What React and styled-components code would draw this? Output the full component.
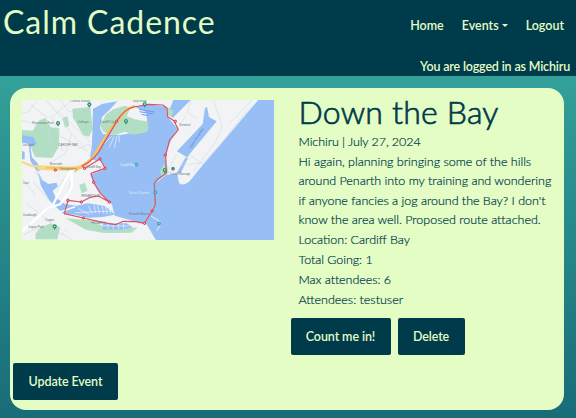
import React from "react";
import styled, { createGlobalStyle } from "styled-components";

const Global = createGlobalStyle`
  * { box-sizing: border-box; }
  body {
    margin: 0;
    height: 418px;
    overflow: hidden;
    font-family: Lato, "Liberation Sans", sans-serif;
    color: #003a4b;
  }
`;
const Page = styled.div`
  height: 418px;
  background: linear-gradient(#39aca0 0%, #186c78 100%);
`;
const Header = styled.header`
  height: 76px;
  background: #003b4b;
  color: #e3fdc5;
  display: flex;
  justify-content: space-between;
  padding: 0 6px 0 3px;
`;
const Brand = styled.h1`
  margin: 3px 0 0;
  font-size: 32px;
  line-height: 38px;
  font-weight: 400;
  letter-spacing: 0.95px;
  white-space: nowrap;
`;
const Side = styled.div`
  display: flex;
  flex-direction: column;
  align-items: flex-end;
`;
const Nav = styled.nav`
  display: flex;
  gap: 18px;
  padding: 17px 6px 0 0;
`;
const NavLink = styled.a`
  display: flex;
  align-items: center;
  gap: 3px;
  font-size: 12.5px;
  line-height: 18px;
  font-weight: 600;
`;
const Caret = styled.span`
  border: 3.5px solid transparent;
  border-top-color: currentColor;
  border-bottom: 0;
  margin-top: -1px;
`;
const Status = styled.p`
  margin: 23px 0 0;
  font-size: 12.5px;
  line-height: 18px;
  font-weight: 600;
  letter-spacing: -0.17px;
  white-space: nowrap;
`;
const Card = styled.main`
  margin: 12px 12px 0 9.5px;
  height: 322px;
  border-radius: 16px;
  background: #e3fdc5;
  display: flex;
  flex-direction: column;
  justify-content: space-between;
  padding: 5px 4px 10px 3.5px;
`;
const Columns = styled.div`
  display: grid;
  grid-template-columns: 278px 1fr;
`;
const RouteMap = styled.svg`
  display: block;
  width: 252px;
  height: 140px;
  margin: 7px 0 0 9px;
`;
const Details = styled.section`
  padding-left: 7.5px;
`;
const Title = styled.h2`
  margin: 0 0 1px;
  font-size: 32px;
  line-height: 38px;
  font-weight: 300;
  -webkit-text-stroke: 0.7px currentColor;
  letter-spacing: 0.2px;
  white-space: nowrap;
`;
const Line = styled.p`
  margin: 0;
  font-size: 12.5px;
  line-height: 19.9px;
  font-weight: 300;
  -webkit-text-stroke: 0.2px currentColor;
  letter-spacing: ${(p) => p.$spacing || "0"};
  white-space: nowrap;
`;
const Message = styled(Line)`
  line-height: 19.4px;
  letter-spacing: -0.02px;
  margin: 0 0 0.5px;
`;
const Actions = styled.div`
  display: flex;
  gap: 7px;
  margin: 8px 0 0 -8px;
`;
const Button = styled.button`
  width: ${(p) => p.$width}px;
  height: 37px;
  padding: 0;
  border: 0;
  border-radius: 2px;
  background: #003b4b;
  color: #e3fdc5;
  font: 600 12.5px Lato, "Liberation Sans", sans-serif;
  letter-spacing: -0.1px;
`;

const routeStops = [[290, 70], [194, 211], [221, 253], [184, 312], [144, 307], [190, 360], [268, 312], [374, 376], [436, 171], [396, 339], [466, 70], [106, 216], [255, 211], [240, 183]];
const places = [[208, 19], [114, 75], [318, 69], [374, 18], [104, 385], [434, 216]];
const darkPlaces = [[459, 212]];
const waterPlaces = [[349, 200], [417, 377], [406, 283]];
const labels = [
  [37, 79, "Pontcanna Park"], [173, 74, "Cathays"], [115, 145, "CARDIFF BAY"],
  [89, 201, "Riverside"], [199, 211, "Cardiff Bay"], [184, 298, "PENARTH RD"],
  [214, 379, "PENARTH"], [327, 350, "Penarth Marina"], [477, 83, "Terminal"],
  [450, 230, "Cardiff Barrage"], [24, 389, "Cogan Park"], [151, 13, "Central Station"],
  [240, 75, "Cardiff City"], [8, 144, "Leckwith"], [76, 369, "Cogan"],
  [120, 215, "Grangetown"], [8, 258, "Cwrt"], [340, 13, "Bay Road"], [8, 353, "Llandough"],
];

function CardiffMap() {
  return (
    <RouteMap viewBox="6 6 756 420" preserveAspectRatio="none" role="img" aria-label="Route around Cardiff Bay">
      <rect x="6" y="6" width="756" height="420" fill="#f1f3f5" />
      <g fill="#b2dec3">
        <path d="M6 96L38 98L58 67L77 60L92 88L118 91L116 147L96 180L45 177L29 138L6 134Z" />
        <path d="M157 32L211 27L218 92L207 116L190 112L159 59Z" />
        <path d="M127 60L142 55L148 83L135 89Z" />
        <path d="M178 261L194 254L203 278L185 286Z" />
        <path d="M46 408L62 388L94 376L120 388L112 424H47Z" />
        <path d="M137 361L208 367L247 383L304 388L357 389L373 404L252 405L198 395Z" />
      </g>
      <g fill="#98bff5">
        <path d="M219 32L246 18L292 10L269 35L246 57L240 90L248 108L302 111L383 96L379 43L346 27L390 19L438 27L443 56L475 95L449 133L436 174L436 227L403 256L403 318L374 377L348 371L284 353L276 320L242 285L211 231L258 212L240 183L230 190L210 180L216 138Z" />
        <path d="M439 230L472 228L477 254Q488 267 509 250L545 205L603 138L683 43L715 6H762V426H407L386 389L378 376L404 318L404 257Z" />
        <path d="M555 31L548 78L471 160L501 178L590 70L567 57L561 27Z" />
        <path d="M460 6H512L458 60L445 45Z" />
        <path d="M471 224L497 178L504 181L482 226Z" />
        <path d="M53 220L67 246L85 258L110 254L113 266L98 278L107 299L137 319L170 323L203 316L252 323L274 338L283 350L248 357L204 359L164 350L128 346L89 308L63 264Z" />
        <path d="M6 112L40 117L50 137L31 147L36 178L53 196L61 218L49 218L31 188L26 137L6 133Z" />
        <path d="M6 158L14 163L14 184L6 184Z" />
        <path d="M248 377L319 375L337 388L309 395H248Z" />
      </g>
      <path d="M362 381L382 386L407 426H311L330 407Z" fill="#f1f3f5" />
      <g fill="#b2dec3">
        <path d="M257 50L280 34L315 23L331 30L320 55L344 64L385 71L382 102L341 110L315 101L284 111L250 102L241 83Z" />
        <path d="M440 26L461 39L453 57L438 48Z" />
        <path d="M431 200L441 201L446 224L425 234L420 220Z" />
      </g>
      <g fill="none" stroke="#cfd8e2" strokeWidth="1.7">
        <path d="M78 6L127 62L156 111L199 151M48 11L25 42L6 47M148 14L95 58L120 114L203 160M154 112L136 166L94 193M110 35L211 132M113 268L150 220M39 251L89 309L134 351M18 315L99 379M91 387L157 426M6 242L47 291M151 250L139 313M120 6L148 42L212 27M6 66L69 87M34 21L83 60" />
        <path d="M486 207L510 171L548 198L600 140L683 35M503 199L549 195M512 8L502 42L530 62M581 8L606 83L590 126L564 163L521 219M697 6L626 79M442 151L462 108L500 50M436 229L471 168" />
        <path d="M79 140Q119 111 127 159M176 152L206 138L235 184M85 90L94 174M122 413L144 392M57 203L47 222L70 254M11 410L49 393L94 426" />
      </g>
      <path d="M154 220L156 264L145 288L120 319L83 330L44 366L6 401M184 208L150 220L99 320" fill="none" stroke="#ffffff" strokeWidth="7" />
      <path d="M112 345L165 326" fill="none" stroke="#fafafa" strokeWidth="5" />
      <g fill="none" stroke="#eef5fa" strokeWidth="2">
        <path d="M275 115L253 137M282 116L268 148M291 115L283 149M297 112L298 132M175 332L209 350M204 322L217 347M222 321L226 344M233 322L238 346M246 322L251 347M257 325L262 349M268 330L272 347M166 344L276 339M247 383L327 384M264 377V394M280 376V394M296 376V394M311 376V394" />
      </g>
      <path d="M357 34L403 42M358 41L400 48M365 49L385 53" stroke="#709bec" strokeWidth="3" fill="none" />
      <path d="M6 191Q36 208 63 205L151 210L193 204M54 212Q105 216 150 214L192 200" fill="none" stroke="#f5d98a" strokeWidth="7" />
      <path d="M75 209L185 210M164 221L211 185" fill="none" stroke="#fbbf65" strokeWidth="6" />
      <path d="M188 204Q218 187 236 150L274 90L303 55Q320 30 345 24" fill="none" stroke="#f8c260" strokeWidth="8" />
      <path d="M192 212L240 183L255 211L213 226L221 253L241 286L268 312L235 294L211 298L184 312L144 307L133 347L190 360L247 373L286 380L310 370L348 371L374 376L396 339L406 319L403 257L411 246L439 226L437 171L449 126L475 95L462 68L443 56L441 31L428 21L386 19L341 27Q311 34 290 70L272 101L247 143Q227 184 187 204Z" fill="none" stroke="#da5063" strokeWidth="3.5" strokeLinejoin="round" />
      <path d="M398 338L405 319L403 257L411 244L438 226L437 186" fill="none" stroke="#8c8d75" strokeWidth="2" />
      <path d="M393 354L414 367Q429 376 410 398" fill="none" stroke="#edf1f4" strokeWidth="3" />
      {routeStops.map(([x, y]) => <circle key={`${x}-${y}`} cx={x} cy={y} r="3.5" fill="#f3b3bb" stroke="#d32d48" strokeWidth="2.8" />)}
      {places.map(([x, y]) => (
        <g key={`${x}-${y}`}><path d={`M${x - 6} ${y}L${x} ${y + 11}L${x + 6} ${y}Z`} fill="#32936d" /><circle cx={x} cy={y} r="6" fill="#32936d" /><circle cx={x} cy={y} r="2" fill="#fff" /></g>
      ))}
      {darkPlaces.map(([x, y]) => <circle key={x} cx={x} cy={y} r="5.5" fill="#54848b" />)}
      {waterPlaces.map(([x, y]) => <circle key={x} cx={x} cy={y} r="4.5" fill="#75c8d4" stroke="#288dae" strokeWidth="2.5" />)}
      <g fill="#6b767e" fontFamily="Liberation Sans, sans-serif" fontSize="9">
        {labels.map(([x, y, text]) => <text key={text} x={x} y={y}>{text}</text>)}
        <text transform="translate(512 151) rotate(-56)" fill="#477fb8">Queen Alexandra</text>
        <text x="301" y="203" fill="#e8f4f7">Cardiff Bay</text>
        <text x="327" y="287" fill="#d9edf5">Bristol Channel</text>
      </g>
    </RouteMap>
  );
}

export default function App() {
  return (
    <Page>
      <Global />
      <Header>
        <Brand>Calm Cadence</Brand>
        <Side>
          <Nav>
            <NavLink>Home</NavLink>
            <NavLink>Events<Caret /></NavLink>
            <NavLink>Logout</NavLink>
          </Nav>
          <Status>You are logged in as Michiru</Status>
        </Side>
      </Header>
      <Card>
        <Columns>
          <CardiffMap />
          <Details>
            <Title>Down the Bay</Title>
            <Line $spacing="-0.08px">Michiru | July 27, 2024</Line>
            <Message>
              Hi again, planning bringing some of the hills<br />
              around Penarth into my training and wondering<br />
              if anyone fancies a jog around the Bay? I don't<br />
              know the area well. Proposed route attached.
            </Message>
            <Line>Location: Cardiff Bay</Line>
            <Line $spacing="-0.05px">Total Going: 1</Line>
            <Line $spacing="-0.05px">Max attendees: 6</Line>
            <Line>Attendees: testuser</Line>
            <Actions>
              <Button $width={100}>Count me in!</Button>
              <Button $width={67}>Delete</Button>
            </Actions>
          </Details>
        </Columns>
        <Button $width={105}>Update Event</Button>
      </Card>
    </Page>
  );
}
